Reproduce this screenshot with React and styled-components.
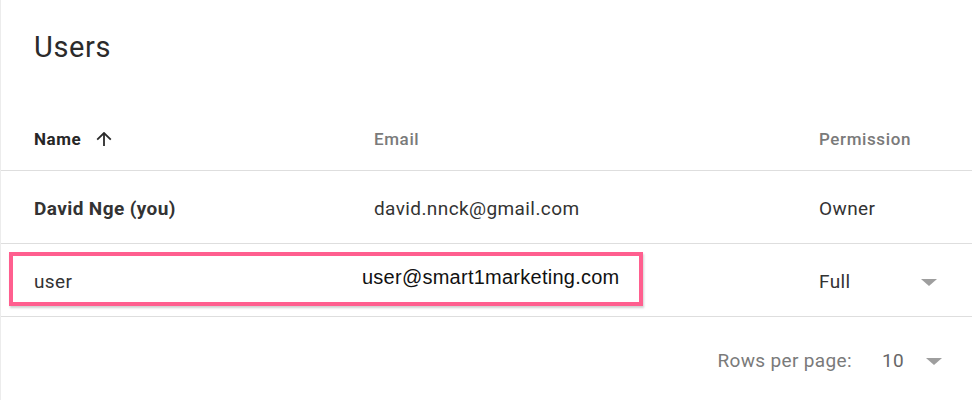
import styled, { createGlobalStyle } from "styled-components";

const GlobalStyle = createGlobalStyle`
  body {
    margin: 0;
    background: #fff;
    font-family: Roboto, "Noto Sans", sans-serif;
  }
`;

const Card = styled.div`
  position: relative;
  width: 972px;
  height: 400px;
  overflow: hidden;
  background: #fff;
  border-left: 1px solid #ececec;
  box-sizing: border-box;
`;

const Title = styled.h1`
  margin: 0;
  padding: 31px 0 0 33px;
  height: 33px;
  font-size: 29px;
  line-height: 32px;
  font-weight: 400;
  letter-spacing: 0.6px;
  color: #2b2b2b;
`;

const Row = styled.div`
  display: grid;
  grid-template-columns: 340px 445px 1fr;
  align-items: start;
  box-sizing: border-box;
  height: ${(p) => p.$height}px;
  padding: ${(p) => p.$top}px 0 0 33px;
  border-bottom: 1px solid #dedede;
  color: #333;
  font-size: 19px;
  line-height: 24px;
  letter-spacing: 0.4px;
`;

const HeadCell = styled.div`
  display: flex;
  align-items: center;
  gap: 15px;
  font-size: 17px;
  letter-spacing: 0.6px;
  font-weight: ${(p) => (p.$active ? 700 : 500)};
  color: ${(p) => (p.$active ? "#262626" : "#7a7a7a")};
`;

const Cell = styled.div`
  font-weight: ${(p) => (p.$bold ? 700 : 400)};
  white-space: nowrap;
`;

const EditedEmail = styled.div`
  margin: -5px 0 0 -12px;
  font-family: "Liberation Sans", Arial, sans-serif;
  font-size: 20px;
  letter-spacing: 0.25px;
  color: #111;
  white-space: nowrap;
`;

const Select = styled.div`
  display: flex;
  align-items: center;
  justify-content: space-between;
  width: 118px;
`;

const Caret = styled.span`
  width: 0;
  height: 0;
  border-left: 8px solid transparent;
  border-right: 8px solid transparent;
  border-top: 7px solid #9e9e9e;
`;

const Footer = styled.div`
  display: flex;
  justify-content: flex-end;
  align-items: center;
  padding: 32px 30px 0 0;
  font-size: 19px;
  line-height: 24px;
  letter-spacing: 0.35px;
  color: #7a7a7a;
`;

const RowsValue = styled.span`
  margin-left: 30px;
  color: #666;
`;

const FooterCaret = styled(Caret)`
  margin-left: 22px;
`;

const Highlight = styled.div`
  position: absolute;
  left: 8px;
  top: 252px;
  width: 634px;
  height: 54px;
  box-sizing: border-box;
  border: 4px solid #ff5f8f;
  box-shadow: 1px 2px 2px rgba(0, 0, 0, 0.18);
  pointer-events: none;
`;

const ArrowUp = () => (
  <svg width="16" height="14" viewBox="0 0 16 14" fill="none" stroke="#2a2a2a" strokeWidth="1.8">
    <polyline points="1.2,7.6 8,1 14.8,7.6" />
    <line x1="8" y1="1.2" x2="8" y2="14" />
  </svg>
);

const users = [
  { name: "David Nge (you)", email: "david.nnck@gmail.com", permission: "Owner", me: true },
  { name: "user", email: "user@smart1marketing.com", permission: "Full", edited: true },
];

export default function App() {
  return (
    <>
      <GlobalStyle />
      <Card>
        <Title>Users</Title>
        <Row $height={107} $top={63}>
          <HeadCell $active>
            Name <ArrowUp />
          </HeadCell>
          <HeadCell>Email</HeadCell>
          <HeadCell>Permission</HeadCell>
        </Row>
        {users.map((u) => (
          <Row key={u.email} $height={73} $top={26}>
            <Cell $bold={u.me}>{u.name}</Cell>
            {u.edited ? <EditedEmail>{u.email}</EditedEmail> : <Cell>{u.email}</Cell>}
            {u.edited ? (
              <Select>
                <Cell>{u.permission}</Cell>
                <Caret />
              </Select>
            ) : (
              <Cell>{u.permission}</Cell>
            )}
          </Row>
        ))}
        <Footer>
          Rows per page:
          <RowsValue>10</RowsValue>
          <FooterCaret />
        </Footer>
        <Highlight />
      </Card>
    </>
  );
}
